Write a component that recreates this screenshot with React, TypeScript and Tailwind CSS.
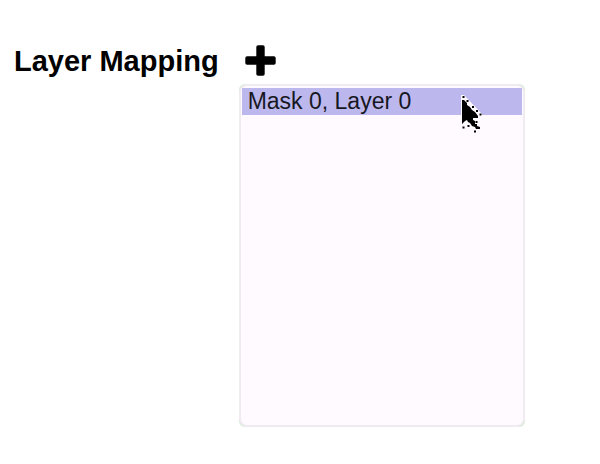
const layers = [{ mask: 0, layer: 0 }];

function PlusIcon() {
  return (
    <svg viewBox="0 0 31 31" className="size-[31px]" aria-hidden="true">
      <rect x="11.3" y="0.3" width="8.4" height="30.4" rx="1.8" />
      <rect x="0.3" y="11.3" width="30.4" height="8.4" rx="1.8" />
    </svg>
  );
}

function Pointer() {
  return (
    <svg
      viewBox="0 0 22 38"
      className="pointer-events-none absolute top-[11px] right-[42px] h-[38px] w-[22px]"
      aria-hidden="true"
    >
      <path d="M0 0h3l18 19v2h-4l-1 4 1 4 3 3v2h-5l-3-5-5-4-4 5H0z" fill="#fdf9ff" />
      <path d="M1 5h2l3 3v2l3 2 2 3 3 2 3 4v2h-5v2l2 1v3h2v2l3 1v2h-4l-1-2-3-1-2-3-2-1-1-2-2 1-3 3z" />
      <rect x="1.5" y="1" width="2" height="2" />
      <rect x="5.5" y="5" width="2" height="2" />
      <rect x="11" y="11" width="2" height="2" />
      <rect x="15" y="15" width="2" height="2" />
      <rect x="18.5" y="18.5" width="2" height="2" />
      <rect x="14.5" y="26" width="2" height="2" />
      <rect x="1.5" y="31.5" width="2" height="2" />
      <rect x="6.5" y="30" width="2" height="2" />
      <rect x="13" y="35.5" width="2" height="2" />
    </svg>
  );
}

export default function App() {
  return (
    <main className="flex items-start gap-5 bg-white pt-[45px] pr-[75px] pl-3.5 font-['Liberation_Sans',Arial,sans-serif] text-black">
      <label htmlFor="mapping" className="shrink-0 text-[29px] leading-8 font-bold whitespace-nowrap">
        Layer Mapping
      </label>
      <div className="flex min-w-0 flex-1 flex-col gap-2">
        <button type="button" aria-label="Add layer mapping" className="ml-1.5 self-start">
          <PlusIcon />
        </button>
        <div className="relative rounded-md bg-[#cdeccd]">
          <select
            id="mapping"
            size={12}
            defaultValue="0-0"
            className="block h-[343px] w-full overflow-hidden rounded-lg border-2 border-[#f0ebf1] bg-[#fefaff] px-px py-0.5 text-[23px] outline-none"
          >
            {layers.map(({ mask, layer }) => (
              <option
                key={`${mask}-${layer}`}
                value={`${mask}-${layer}`}
                className="h-[27px] min-h-0 px-1.5 py-0 leading-[27px] text-[#171722] checked:bg-[linear-gradient(#bcb8ee,#bcb8ee)]"
              >
                {`Mask ${mask}, Layer ${layer}`}
              </option>
            ))}
          </select>
          <Pointer />
        </div>
      </div>
    </main>
  );
}
